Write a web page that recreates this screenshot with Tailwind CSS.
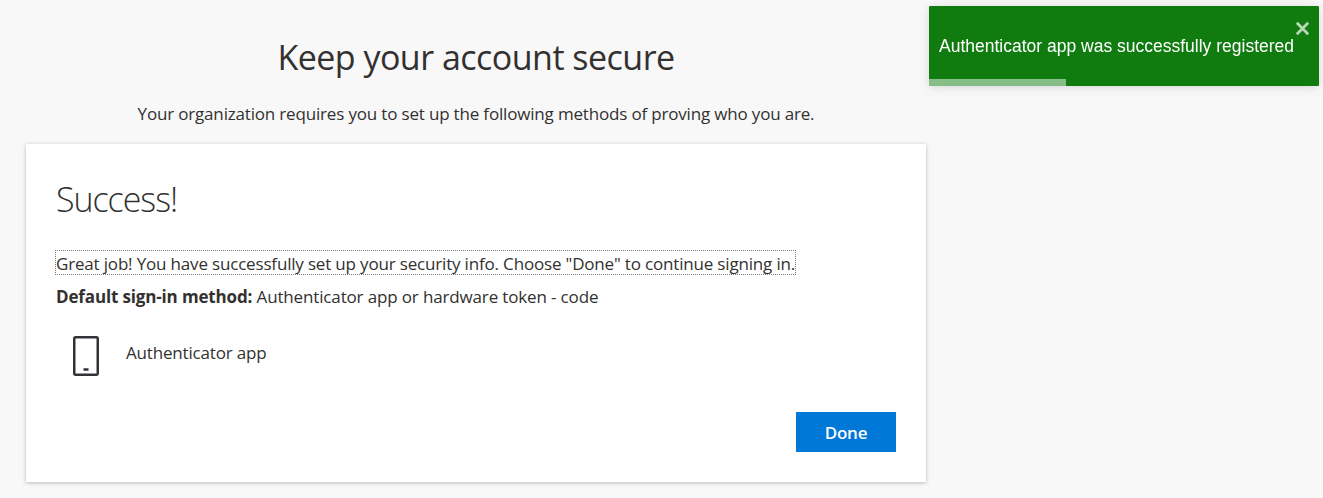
<!DOCTYPE html>
<html lang="en">
<head>
  <meta charset="UTF-8" />
  <meta name="viewport" content="width=device-width, initial-scale=1.0" />
  <title>Keep your account secure</title>
  <script src="https://cdn.jsdelivr.net/npm/@tailwindcss/browser@4"></script>
</head>
<body class="bg-[#f8f8f8] text-[#323130] font-['Open_Sans',sans-serif] text-[17px] leading-6 tracking-[-0.175px] min-h-screen overflow-hidden">

  <!-- Page content -->
  <main class="w-[900px] ml-[26px] pt-[35px]">
    <h1 class="text-center text-[34px] leading-[44px] tracking-[-0.52px] whitespace-nowrap">Keep your account secure</h1>
    <p class="mt-[23px] text-center whitespace-nowrap">Your organization requires you to set up the following methods of proving who you are.</p>

    <!-- Card -->
    <section class="mt-[18px] h-[338px] bg-white px-[30px] pt-[33px] shadow-[0_1px_4px_rgba(0,0,0,0.25)]">
      <h2 class="text-[34px] leading-[44px] font-light tracking-[-1.05px] whitespace-nowrap">Success!</h2>
      <p class="-ml-px mt-[29px] h-[25px] w-[741px] border border-dotted border-[#777] leading-[25px] whitespace-nowrap">Great job! You have successfully set up your security info. Choose "Done" to continue signing in.</p>
      <p class="mt-[10px] tracking-[-0.15px] whitespace-nowrap"><strong class="font-bold">Default sign-in method:</strong> <span>Authenticator app or hardware token - code</span></p>

      <div class="mt-[27px] flex items-start pl-[17px]">
        <svg class="h-10 w-[26px]" viewBox="0 0 26 40" fill="none" aria-hidden="true">
          <rect x="1.25" y="1.25" width="23.5" height="37.5" rx="1.5" stroke="#323338" stroke-width="2.5" />
          <path d="M10.5 33.5h5" stroke="#323338" stroke-width="2.5" />
        </svg>
        <span class="ml-[27px] mt-[5px] whitespace-nowrap">Authenticator app</span>
      </div>

      <div class="mt-9 flex justify-end">
        <button class="h-10 w-[100px] bg-[#0078d7] pt-px text-white font-semibold">Done</button>
      </div>
    </section>
  </main>

  <!-- Toast -->
  <div class="fixed left-[929px] top-1.5 flex h-20 w-[390px] items-center rounded-[1px] bg-[#107c10] pl-2.5 text-white shadow-[0_1px_10px_rgba(0,0,0,0.1),0_2px_15px_rgba(0,0,0,0.05)]" role="alert">
    <p class="font-['Liberation_Sans',Arial,sans-serif] text-[17.5px] tracking-normal whitespace-nowrap">Authenticator app was successfully registered</p>
    <button class="absolute right-[9px] top-[15px]" aria-label="close">
      <svg class="h-[15px] w-[15px]" viewBox="0 0 15 15" fill="none" aria-hidden="true">
        <path d="M1.8 1.8l11.4 11.4M13.2 1.8L1.8 13.2" stroke="#b7d8b7" stroke-width="2.8" />
      </svg>
    </button>
    <div class="absolute bottom-0 left-0 h-[7px] w-[137px] bg-[#87bd87]"></div>
  </div>

</body>
</html>
